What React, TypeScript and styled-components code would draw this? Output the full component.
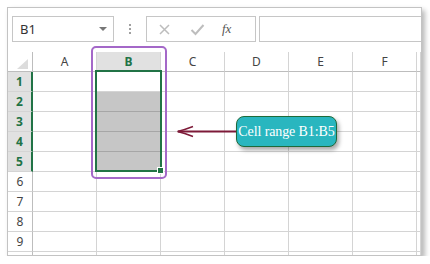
import React from 'react';
import styled, { createGlobalStyle, css } from 'styled-components';

const GlobalStyle = createGlobalStyle`
  html, body {
    margin: 0;
    padding: 0;
    background: #ffffff;
  }
  body {
    font-family: 'Noto Sans', 'Open Sans', sans-serif;
  }
`;

const GRID_LINE = '#d4d4d4';
const HEAD_LINE = '#bdbdbd';
const EXCEL_GREEN = '#217346';

const Page = styled.div`
  padding: 7px 0 0 7px;
`;

const Window = styled.div`
  position: relative;
  box-sizing: border-box;
  width: 415px;
  height: 249px;
  border: 1px solid #c3c3c3;
  background: #fff;
  box-shadow: 3px 3px 5px rgba(0, 0, 0, 0.28);
  overflow: hidden;
`;

const Toolbar = styled.div`
  display: flex;
  align-items: center;
  height: 44px;
  padding: 8px 0 10px 4px;
  box-sizing: border-box;
`;

const NameBox = styled.div`
  box-sizing: border-box;
  width: 102px;
  height: 26px;
  border: 1px solid #c6c6c6;
  display: flex;
  align-items: center;
  justify-content: space-between;
  padding: 0 6px 0 7px;
  font-size: 13px;
  color: #333;
`;

const Caret = styled.span`
  width: 0;
  height: 0;
  border-left: 4px solid transparent;
  border-right: 4px solid transparent;
  border-top: 4px solid #777;
`;

const Grip = styled.div`
  width: 32px;
  display: flex;
  flex-direction: column;
  align-items: center;
  gap: 2px;
  span {
    width: 2px;
    height: 2px;
    background: #a0a0a0;
  }
`;

const FxButtons = styled.div`
  box-sizing: border-box;
  width: 110px;
  height: 26px;
  border: 1px solid #c6c6c6;
  display: flex;
  align-items: center;
  padding-left: 11px;
  gap: 19px;
`;

const FxLabel = styled.span`
  font-family: 'Liberation Serif', 'DejaVu Serif', serif;
  font-style: italic;
  font-size: 13px;
  color: #555;
  margin-left: -2px;
`;

const FormulaInput = styled.div`
  flex: 1;
  height: 26px;
  box-sizing: border-box;
  margin-left: 3px;
  border: 1px solid #c6c6c6;
  border-right: none;
`;

const Grid = styled.div`
  display: grid;
  grid-template-columns: 25px repeat(6, 64px) 1fr;
  grid-auto-rows: 20px;
`;

const Cell = styled.div<{ $selected?: boolean }>`
  box-sizing: border-box;
  border-right: 1px solid ${GRID_LINE};
  border-bottom: 1px solid ${GRID_LINE};
  ${(p) =>
    p.$selected &&
    css`
      background: #c6c6c6;
      border-bottom-color: #a6a6a6;
      border-right-color: #a6a6a6;
    `}
`;

const Corner = styled.div`
  box-sizing: border-box;
  border-right: 1px solid ${HEAD_LINE};
  border-bottom: 1px solid ${HEAD_LINE};
  display: flex;
  align-items: flex-end;
  justify-content: flex-end;
  padding: 0 4px 2px 0;
`;

const ColHead = styled.div<{ $active?: boolean }>`
  box-sizing: border-box;
  border-right: 1px solid ${GRID_LINE};
  border-bottom: 1px solid ${HEAD_LINE};
  display: flex;
  align-items: center;
  justify-content: center;
  font-size: 12px;
  color: #444;
  ${(p) =>
    p.$active &&
    css`
      background: #e1e1e1;
      color: ${EXCEL_GREEN};
      font-weight: bold;
      border-bottom: 2px solid ${EXCEL_GREEN};
    `}
`;

const RowHead = styled.div<{ $active?: boolean }>`
  box-sizing: border-box;
  border-right: 1px solid ${HEAD_LINE};
  border-bottom: 1px solid ${GRID_LINE};
  display: flex;
  align-items: center;
  justify-content: center;
  font-size: 12px;
  color: #444;
  ${(p) =>
    p.$active &&
    css`
      background: #e1e1e1;
      color: ${EXCEL_GREEN};
      font-weight: bold;
      border-right: 2px solid ${EXCEL_GREEN};
    `}
`;

const SelectionBox = styled.div`
  position: absolute;
  left: 87px;
  top: 62px;
  width: 67px;
  height: 102px;
  box-sizing: border-box;
  border: 2px solid ${EXCEL_GREEN};
`;

const FillHandle = styled.div`
  position: absolute;
  right: -4px;
  bottom: -4px;
  width: 5px;
  height: 5px;
  background: ${EXCEL_GREEN};
  border: 1px solid #fff;
`;

const Highlight = styled.div`
  position: absolute;
  left: 83px;
  top: 38px;
  width: 76px;
  height: 133px;
  box-sizing: border-box;
  border: 2px solid #a468c8;
  border-radius: 5px;
`;

const Pointer = styled.svg`
  position: absolute;
  left: 168px;
  top: 116px;
`;

const Callout = styled.div`
  position: absolute;
  left: 228px;
  top: 108px;
  width: 101px;
  height: 31px;
  box-sizing: border-box;
  background: #29b6bf;
  border: 1px solid #1f6a3a;
  border-radius: 8px;
  box-shadow: 2px 3px 4px rgba(0, 0, 0, 0.35);
  display: flex;
  align-items: center;
  justify-content: center;
  font-family: 'Liberation Serif', 'DejaVu Serif', serif;
  font-size: 14px;
  color: #fff;
  white-space: nowrap;
  letter-spacing: -0.1px;
`;

const columns = ['A', 'B', 'C', 'D', 'E', 'F', ''];
const rows = [1, 2, 3, 4, 5, 6, 7, 8, 9, 10];

export default function App() {
  return (
    <Page>
      <GlobalStyle />
      <Window>
        <Toolbar>
          <NameBox>
            B1
            <Caret />
          </NameBox>
          <Grip>
            <span />
            <span />
            <span />
          </Grip>
          <FxButtons>
            <svg width="13" height="13" viewBox="0 0 13 13">
              <path d="M2 2 L11 11 M11 2 L2 11" stroke="#bdbdbd" strokeWidth="1.5" fill="none" />
            </svg>
            <svg width="15" height="13" viewBox="0 0 15 13">
              <path d="M1.5 7 L5.5 11 L13.5 2" stroke="#bdbdbd" strokeWidth="2" fill="none" />
            </svg>
            <FxLabel>fx</FxLabel>
          </FxButtons>
          <FormulaInput />
        </Toolbar>
        <Grid>
          <Corner>
            <svg width="11" height="10" viewBox="0 0 11 10">
              <polygon points="11,0 11,10 0,10" fill="#dcdcdc" />
            </svg>
          </Corner>
          {columns.map((c, i) => (
            <ColHead key={i} $active={c === 'B'}>
              {c}
            </ColHead>
          ))}
          {rows.map((r) => (
            <React.Fragment key={r}>
              <RowHead $active={r <= 5}>{r < 10 ? r : ''}</RowHead>
              {columns.map((c, i) => (
                <Cell key={i} $selected={c === 'B' && r >= 2 && r <= 5} />
              ))}
            </React.Fragment>
          ))}
        </Grid>
        <Highlight />
        <SelectionBox>
          <FillHandle />
        </SelectionBox>
        <Pointer width="62" height="16" viewBox="0 0 62 16">
          <path d="M2 7.5 H62" stroke="#7d1a38" strokeWidth="2" fill="none" />
          <path d="M17 2.5 Q8 6 1.5 7.5 Q8 9 17 12.5" stroke="#7d1a38" strokeWidth="1.4" fill="none" />
        </Pointer>
        <Callout>Cell range B1:B5</Callout>
      </Window>
    </Page>
  );
}
